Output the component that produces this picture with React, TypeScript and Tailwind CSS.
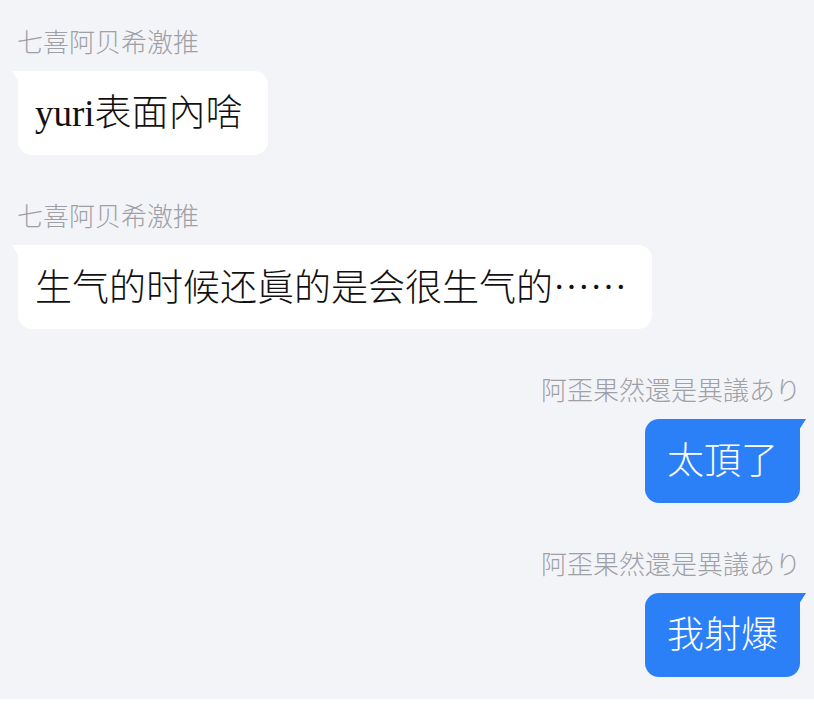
import React from "react";

const nameCls =
  "text-[26px] leading-[34px] text-[#9ea0a6] whitespace-nowrap font-light";
const font = {
  fontFamily: '"Liberation Serif", "Noto Sans CJK SC", serif',
};
const cjk = { fontFamily: '"Noto Sans CJK SC", sans-serif' };

function Text({ text }: { text: string }) {
  const parts = text.split(/(……)/);
  return (
    <>
      {parts.map((p, i) =>
        p === "……" ? (
          <span key={i} style={cjk}>
            {p}
          </span>
        ) : (
          <span key={i}>{p}</span>
        )
      )}
    </>
  );
}

function LeftMsg({ name, text }: { name: string; text: string }) {
  return (
    <div className="flex flex-col items-start">
      <div className={`${nameCls} pl-[17px]`} style={cjk}>
        {name}
      </div>
      <div className="relative mt-[13px] ml-[18px] bg-white rounded-[14px] rounded-tl-none h-[84px] flex items-center pl-[17px] pr-[25px]">
        <svg className="absolute left-[-6px] top-0" width="7" height="11" viewBox="0 0 7 11">
          <polygon points="0,0 7,0 7,11" fill="#ffffff" />
        </svg>
        <span className="text-[37px] leading-none text-[#111111] whitespace-nowrap font-light" style={font}>
          <Text text={text} />
        </span>
      </div>
    </div>
  );
}

function RightMsg({ name, text }: { name: string; text: string }) {
  return (
    <div className="flex flex-col items-end">
      <div className={`${nameCls} pr-[13px]`} style={cjk}>
        {name}
      </div>
      <div className="relative mt-[13px] mr-[14px] bg-[#2b7ff7] rounded-[14px] rounded-tr-none h-[84px] flex items-center pl-[22px] pr-[22px]">
        <svg className="absolute right-[-6px] top-0" width="7" height="11" viewBox="0 0 7 11">
          <polygon points="0,0 7,0 0,11" fill="#2b7ff7" />
        </svg>
        <span className="text-[37px] leading-none text-white whitespace-nowrap font-light" style={font}>
          <Text text={text} />
        </span>
      </div>
    </div>
  );
}

export default function App() {
  return (
    <div className="w-[814px] h-[714px] bg-white overflow-hidden">
      <div className="h-[699px] bg-[#f3f4f8] pt-[24px] flex flex-col gap-[43px]">
        <LeftMsg name="七喜阿贝希激推" text="yuri表面內啥" />
        <LeftMsg name="七喜阿贝希激推" text="生气的时候还眞的是会很生气的……" />
        <RightMsg name="阿歪果然還是異議あり" text="太頂了" />
        <RightMsg name="阿歪果然還是異議あり" text="我射爆" />
      </div>
    </div>
  );
}
